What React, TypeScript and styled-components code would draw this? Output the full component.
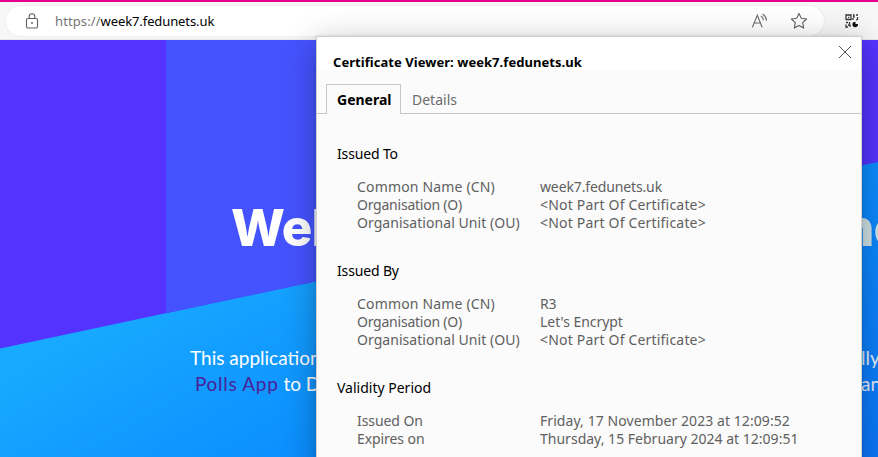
import React from "react";
import styled, { createGlobalStyle } from "styled-components";

const Global = createGlobalStyle`
  * { box-sizing: border-box; }
  body { margin: 0; overflow: hidden; font-family: "Noto Sans", sans-serif; }
`;
const Browser = styled.div`
  position: relative; width: 878px; height: 457px; overflow: hidden;
  display: flex; flex-direction: column; background: #f7f7f7;
`;
const Toolbar = styled.header`
  height: 40px; border-top: 2px solid #e8008c; display: flex; align-items: center;
  padding: 0 18px 0 6px; background: #f7f7f7; border-bottom: 1px solid #e9e9ec;
`;
const AddressBar = styled.div`
  width: 818px; height: 30px; border-radius: 15px; background: #fff; display: flex;
  align-items: center; padding: 0 16px 0 19px; box-shadow: 0 0 3px rgba(0,0,0,.08);
  svg { flex: none; }
`;
const Url = styled.div`
  flex: 1; margin-left: 16px; font-size: 13px; line-height: 20px; color: #767676;
  letter-spacing: .1px; white-space: nowrap;
  b { font-weight: 400; color: #000; letter-spacing: -.1px; }
`;
const BarIcons = styled.div`display: flex; align-items: center; gap: 22px;`;
const Extension = styled.div`margin-left: auto; width: 16px; height: 16px; svg { display: block; }`;
const Hero = styled.main`
  flex: 1; position: relative; overflow: hidden;
  background: linear-gradient(150deg, #18aaff 35%, #0c90ff 62%, #0b76f9 100%);
`;
const Backdrop = styled.svg`position: absolute; inset: 0; display: block;`;
const HeroCopy = styled.div`
  position: relative; padding-top: 158px; color: #fff;
`;
const Split = styled.div<{ $left: number; $right: number }>`
  display: flex; justify-content: space-between; white-space: nowrap;
  padding-left: ${p => p.$left}px; 
  > :last-child { width: ${p => p.$right}px; flex: none; }
`;
const Heading = styled(Split)`
  font-family: Inter, sans-serif; font-weight: 800; font-size: 51px; line-height: 60px; letter-spacing: -.8px;
  > :last-child { color: #cfe2e6; }
`;
const Body = styled(Split)`
  font-family: Lato, sans-serif; font-size: 19px; line-height: 26px;
  a { color: #4a2298; letter-spacing: .7px; }
  > :last-child { color: #e4ecf8; }
`;
const Copy = styled.div`margin-top: 87px;`;
const Dialog = styled.section`
  position: absolute; left: 316px; top: 36px; width: 546px; height: 440px;
  background: #fbfbfb; border: 1px solid #d0d0d2; box-shadow: 0 8px 32px rgba(0,0,0,.3), 0 0 3px rgba(0,0,0,.12);
`;
const TitleBar = styled.div`
  height: 33px; background: #fff; display: flex; justify-content: space-between; padding: 8px 9px 0 16px;
`;
const Title = styled.h1`
  margin: 8px 0 0; font-size: 13px; line-height: 18px; font-weight: 700; letter-spacing: .05px; white-space: nowrap;
`;
const Tabs = styled.div`
  height: 44px; padding: 14px 0 0 9px; display: flex; border-bottom: 1px solid #c6c6c6;
`;
const Tab = styled.div<{ $active?: boolean }>`
  height: 30px; width: ${p => (p.$active ? 75 : 68)}px; padding-left: 10px;
  border: ${p => (p.$active ? "1px solid #c6c6c6" : "1px solid transparent")}; border-bottom: 0;
  background: ${p => (p.$active ? "#fbfbfb" : "transparent")}; color: ${p => (p.$active ? "#000" : "#6b6b6b")};
  font-size: 14px; line-height: 30px; font-weight: ${p => (p.$active ? 700 : 400)};
`;
const Group = styled.div`
  height: 117px; padding: 0 20px; font-size: 14px;
`;
const GroupTitle = styled.h2<{ $track: number }>`
  margin: 0 0 15px; font-size: 14px; line-height: 18px; font-weight: 400; color: #000; letter-spacing: ${p => p.$track}px;
`;
const Groups = styled.div`padding-top: 31px;`;
const Row = styled.div`
  display: grid; grid-template-columns: 183px 1fr; margin-left: 20px; line-height: 18px; color: #606060;
`;
const Cell = styled.span<{ $track: number }>`letter-spacing: ${p => p.$track}px; white-space: nowrap;`;

const groups: { title: string; track: number; rows: [string, number, string, number][] }[] = [
  { title: "Issued To", track: -0.15, rows: [
    ["Common Name (CN)", 0.17, "week7.fedunets.uk", -0.13],
    ["Organisation (O)", -0.23, "<Not Part Of Certificate>", 0.19],
    ["Organisational Unit (OU)", 0.05, "<Not Part Of Certificate>", 0.19]] },
  { title: "Issued By", track: -0.15, rows: [
    ["Common Name (CN)", 0.17, "R3", -0.2],
    ["Organisation (O)", -0.23, "Let's Encrypt", -0.04],
    ["Organisational Unit (OU)", 0.05, "<Not Part Of Certificate>", 0.19]] },
  { title: "Validity Period", track: 0, rows: [
    ["Issued On", -0.08, "Friday, 17 November 2023 at 12:09:52", 0.07],
    ["Expires on", -0.08, "Thursday, 15 February 2024 at 12:09:51", 0.01]] },
];

const Lock = () => (
  <svg width="14" height="16" viewBox="0 0 14 16" fill="none" stroke="#606060" strokeWidth="1.1">
    <rect x="1.5" y="5.5" width="11" height="9.5" rx="1.5" /><path d="M4.2 5.5V3.6a2.8 2.8 0 0 1 5.6 0v1.9" />
    <circle cx="7" cy="10" r=".9" fill="#606060" stroke="none" />
  </svg>
);
const ReadAloud = () => (
  <svg width="17" height="16" viewBox="0 0 17 16" fill="none" stroke="#6b6b6b" strokeWidth="1.1" strokeLinecap="round">
    <path d="M1.500 14 6.300 2.2 11 14M3.200 10h6.200M10.2 3.2q2 1.3 2.1 3.5M12 1.3q3.2 2.2 3.4 5.9" />
  </svg>
);
const Star = () => (
  <svg width="18" height="18" viewBox="0 0 18 18" fill="none" stroke="#606060" strokeWidth="1.1" strokeLinejoin="round">
    <path d="m9 1.4 2.3 4.9 5.3.7-3.9 3.7 1 5.4L9 13.4l-4.7 2.7 1-5.4L1.4 7l5.3-.7z" />
  </svg>
);
const Qr = () => (
  <svg width="16" height="16" viewBox="0 0 16 16" fill="none" stroke="#333" strokeWidth="1.3">
    <rect width="16" height="16" rx="1" fill="#fff" stroke="#dcdcdc" strokeWidth=".6" />
    <path d="M2 2h5v4.500H2zM4 4.300h1.200M9 2h1v2H9M9 5v2M12 2h2M13.500 4v2.500l-1.500.500M2 9.500h2M5.500 9v2M2 11.500V14h2M4 12h2v2" />
    <circle cx="11.2" cy="11.5" r="2.8" fill="#111" stroke="none" /><path d="M11.500 11V8.500H14V11z" fill="#fff" stroke="none" />
  </svg>
);
const Close = () => (
  <svg width="14" height="14" viewBox="0 0 14 14" stroke="#555" strokeWidth="1"><path d="m1 1 12 12M13 1 1 13" /></svg>
);

export default function App() {
  return (
    <Browser>
      <Global />
      <Toolbar>
        <AddressBar>
          <Lock />
          <Url>https://<b>week7.fedunets.uk</b></Url>
          <BarIcons><ReadAloud /><Star /></BarIcons>
        </AddressBar>
        <Extension><Qr /></Extension>
      </Toolbar>
      <Hero>
        <Backdrop width="878" height="417" viewBox="0 0 878 417">
          <path d="M0 0H878V122L0 308.500Z" fill="#5433ff" />
          <path d="M166 0H700V159.800L166 273.200Z" fill="#4553ff" />
        </Backdrop>
        <HeroCopy>
          <Heading $left={231} $right={36}><span>Wel</span><span>ne</span></Heading>
          <Copy>
            <Body $left={190} $right={17}><span>This application</span><span>lly</span></Body>
            <Body $left={195} $right={17}><span><a>Polls App</a> to D</span><span>an</span></Body>
          </Copy>
        </HeroCopy>
      </Hero>
      <Dialog>
        <TitleBar><Title>Certificate Viewer: week7.fedunets.uk</Title><Close /></TitleBar>
        <Tabs><Tab $active>General</Tab><Tab>Details</Tab></Tabs>
        <Groups>
          {groups.map(g => (
            <Group key={g.title}>
              <GroupTitle $track={g.track}>{g.title}</GroupTitle>
              {g.rows.map(r => (
                <Row key={r[0]}><Cell $track={r[1]}>{r[0]}</Cell><Cell $track={r[3]}>{r[2]}</Cell></Row>
              ))}
            </Group>
          ))}
        </Groups>
      </Dialog>
    </Browser>
  );
}
